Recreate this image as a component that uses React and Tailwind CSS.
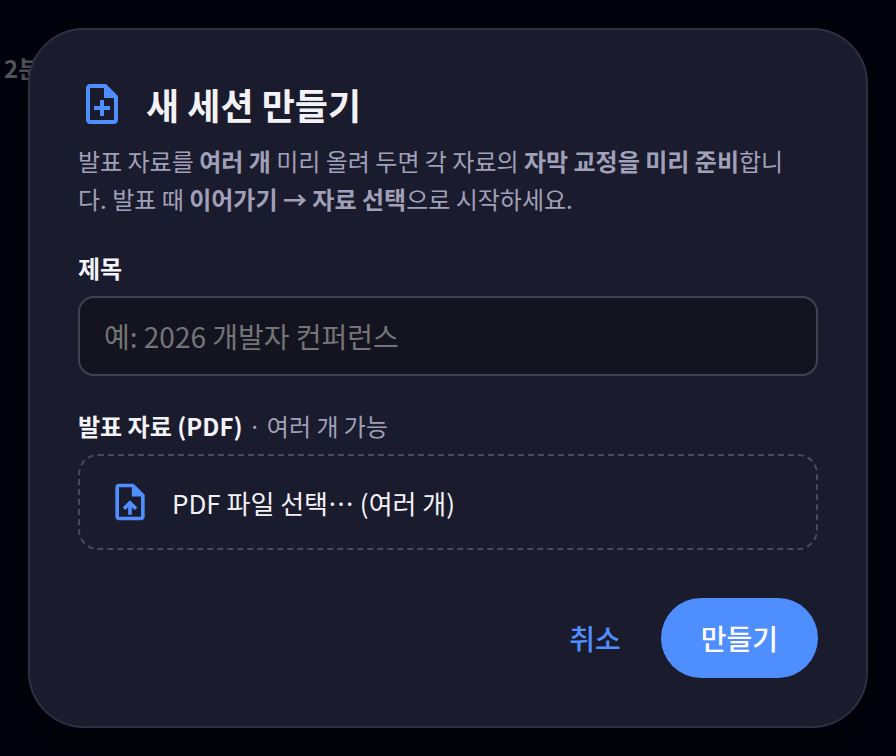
import React, { useState } from 'react';

const NOTE_ADD =
  'M11 18h2v-3h3v-2h-3v-3h-2v3H8v2h3v3Zm-5 4q-.825 0-1.413-.588Q4 20.825 4 20V4q0-.825.588-1.413Q5.175 2 6 2h8l6 6v12q0 .825-.588 1.413Q18.825 22 18 22H6Zm7-13V4H6v16h12V9h-5Z';
const UPLOAD_FILE =
  'M11 19h2v-4.175l1.6 1.6L16 15l-4-4-4 4 1.425 1.4L11 14.825V19Zm-5 3q-.825 0-1.413-.588Q4 20.825 4 20V4q0-.825.588-1.413Q5.175 2 6 2h8l6 6v12q0 .825-.588 1.413Q18.825 22 18 22H6Zm7-13V4H6v16h12V9h-5Z';

function Icon({ path, className }) {
  return (
    <svg viewBox="0 0 24 24" fill="currentColor" aria-hidden="true" className={className}>
      <path d={path} />
    </svg>
  );
}

export default function App() {
  const [title, setTitle] = useState('');

  return (
    <div className="relative min-h-screen overflow-hidden bg-[#02020e] font-['Noto_Sans_CJK_KR',sans-serif]">
      {/* Page behind the dialog */}
      <p className="absolute left-1 top-[50px] text-2xl leading-9 font-bold text-[#5c5c66]">2분</p>

      <div className="relative flex min-h-screen items-center justify-center p-7">
        <form
          role="dialog"
          aria-modal="true"
          aria-labelledby="dialog-title"
          onSubmit={(e) => e.preventDefault()}
          className="w-full max-w-[880px] rounded-[56px] border-2 border-[#2f2f42] bg-[#1b1b2e] p-12 shadow-[0_16px_64px_rgba(0,0,0,0.6)]"
        >
          <div className="flex items-center gap-5">
            <Icon path={NOTE_ADD} className="size-12 shrink-0 text-[#4f8eff]" />
            <h2 id="dialog-title" className="text-4xl leading-[52px] font-bold text-[#f2f2f7]">
              새 세션 만들기
            </h2>
          </div>

          <p className="mt-3 pr-3 text-2xl leading-[38px] break-all text-[#a0a0b8]">
            발표 자료를 <b>여러 개</b> 미리 올려 두면 각 자료의 <b>자막 교정을 미리 준비</b>합니다. 발표 때{' '}
            <b>이어가기 → 자료 선택</b>으로 시작하세요.
          </p>

          <div className="mt-8 flex flex-col gap-2.5">
            <label htmlFor="title" className="text-2xl leading-9 font-bold text-[#f2f2f7]">
              제목
            </label>
            <input
              id="title"
              type="text"
              value={title}
              onChange={(e) => setTitle(e.target.value)}
              placeholder="예: 2026 개발자 컨퍼런스"
              className="h-20 w-full rounded-2xl border-2 border-[#42424f] bg-[#141421] px-6 text-[28px] text-[#f2f2f7] outline-none placeholder:text-[#757575] focus:border-[#4f8eff]"
            />
          </div>

          <div className="mt-8 flex flex-col gap-2.5">
            <p id="files-label" className="text-2xl leading-9 font-bold text-[#f2f2f7]">
              발표 자료 (PDF) <span className="font-normal text-[#a0a0b8]">· 여러 개 가능</span>
            </p>
            <button
              type="button"
              aria-describedby="files-label"
              className="flex h-24 w-full cursor-pointer items-center gap-5 rounded-[20px] border-2 border-dashed border-[#494958] px-7 text-[26px] text-[#f2f2f7]"
            >
              <Icon path={UPLOAD_FILE} className="size-11 shrink-0 text-[#4f8eff]" />
              PDF 파일 선택… (여러 개)
            </button>
          </div>

          <div className="mt-12 flex justify-end gap-4">
            <button type="button" className="h-20 cursor-pointer rounded-full px-6 text-[28px] font-medium text-[#4f8eff]">
              취소
            </button>
            <button type="submit" className="h-20 cursor-pointer rounded-full bg-[#4f8eff] px-10 text-[28px] font-medium text-white">
              만들기
            </button>
          </div>
        </form>
      </div>
    </div>
  );
}
